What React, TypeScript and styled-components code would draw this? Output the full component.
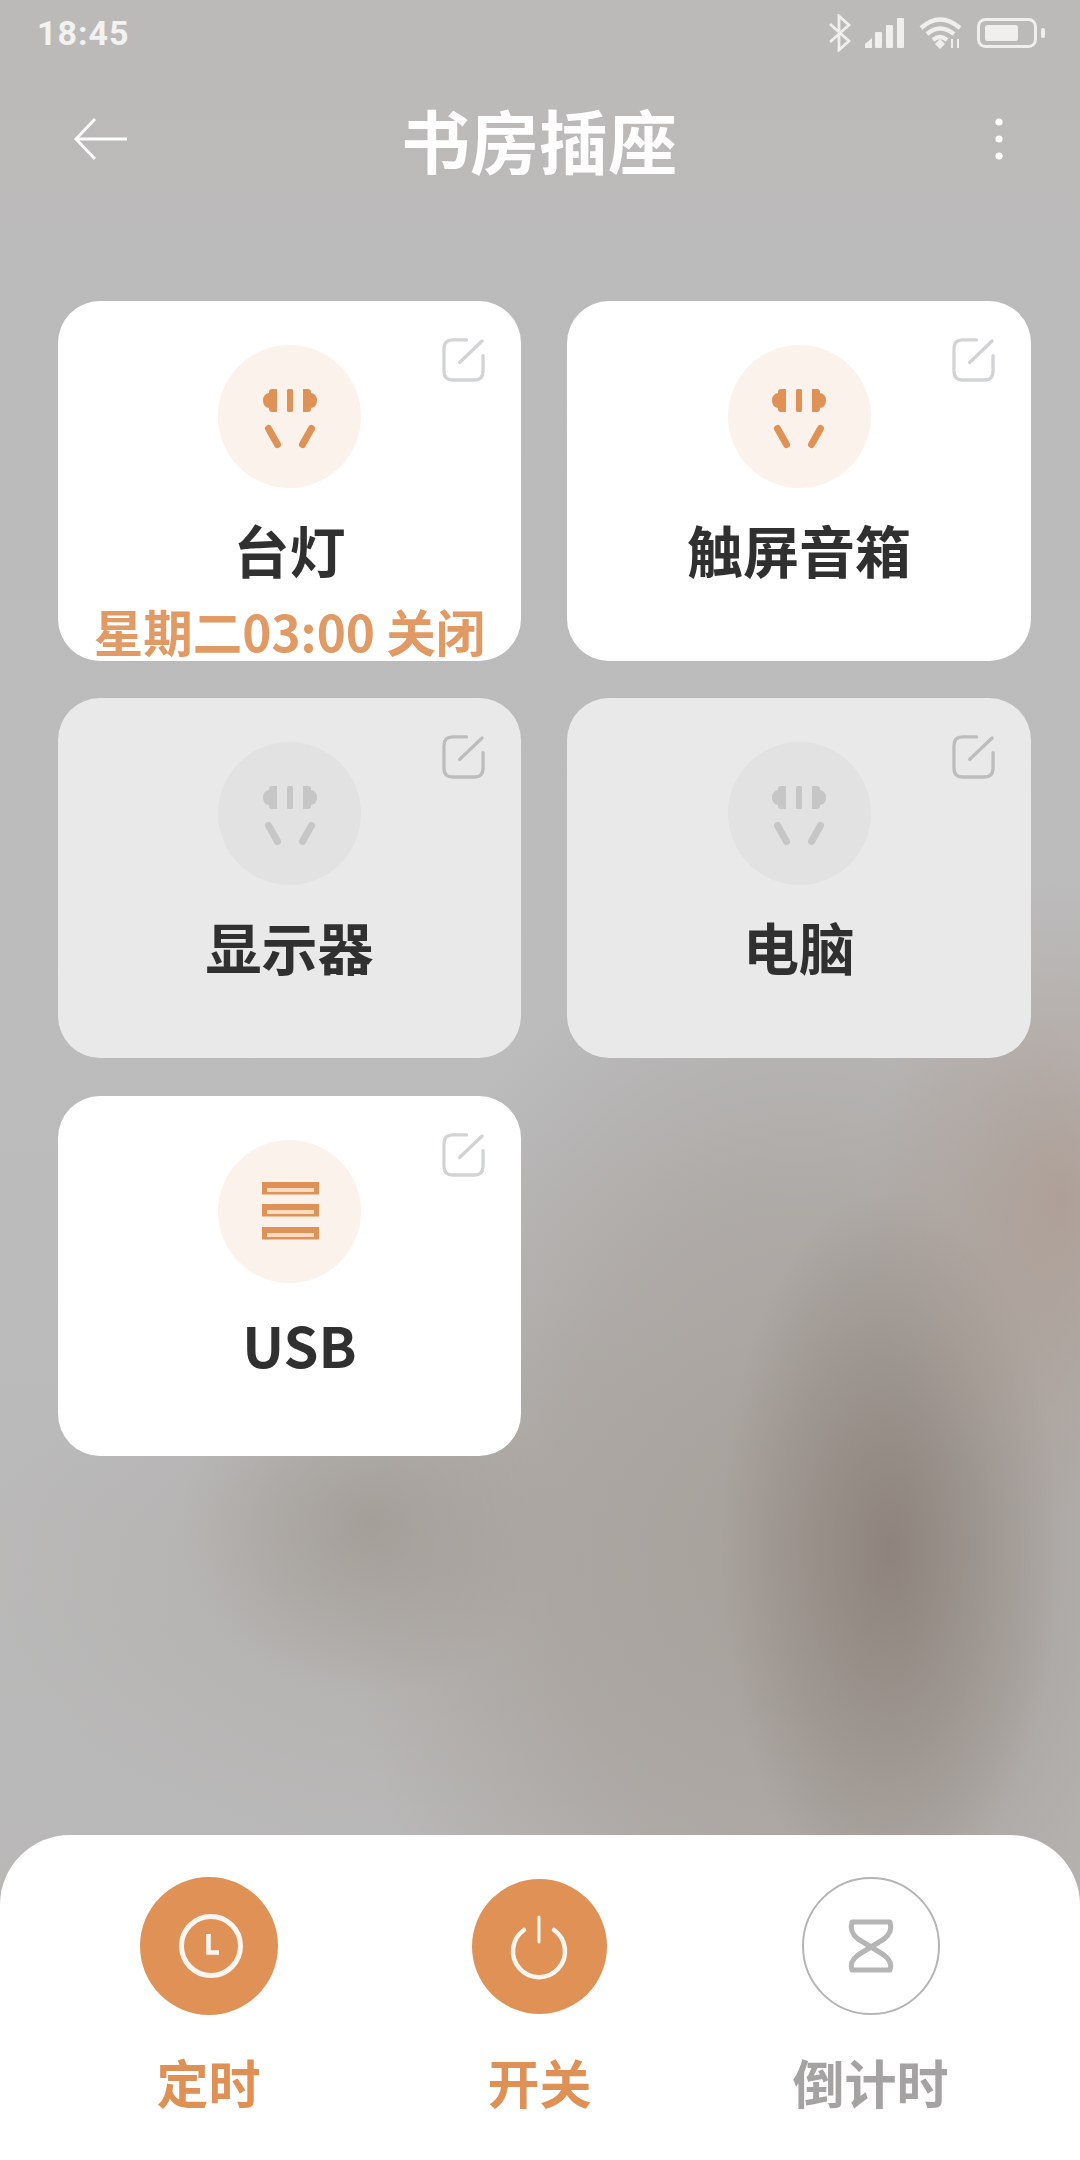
import React, { FC } from 'react'
import styled, { createGlobalStyle } from 'styled-components'

const ORANGE = '#e09155'
const FONT = '"Noto Sans CJK SC", "Noto Sans", sans-serif'

const GlobalStyle = createGlobalStyle`
  html, body {
    margin: 0;
    padding: 0;
  }
  body {
    font-family: ${FONT};
  }
`

const Page = styled.div`
  position: relative;
  width: 1080px;
  height: 2160px;
  overflow: hidden;
  display: flex;
  flex-direction: column;
  background:
    radial-gradient(ellipse 190px 320px at 1060px 1200px, rgba(172, 155, 145, 0.8), rgba(172, 155, 145, 0.4) 50%, rgba(172, 155, 145, 0)),
    radial-gradient(ellipse 170px 360px at 890px 1550px, rgba(140, 130, 122, 0.95), rgba(140, 130, 122, 0.5) 50%, rgba(140, 130, 122, 0)),
    radial-gradient(ellipse 460px 620px at 800px 1540px, rgba(165, 158, 152, 0.9), rgba(165, 158, 152, 0.6) 55%, rgba(165, 158, 152, 0)),
    radial-gradient(ellipse 190px 170px at 370px 1525px, rgba(160, 154, 147, 0.8), rgba(160, 154, 147, 0)),
    radial-gradient(ellipse 500px 280px at 450px 1570px, rgba(176, 172, 168, 0.75), rgba(176, 172, 168, 0)),
    linear-gradient(#bbbab9, #bcbcbd 45%, #b8b7b6);
`

const StatusBar = styled.div`
  height: 66px;
  padding: 0 35px 0 37px;
  display: flex;
  align-items: center;
  justify-content: space-between;
  box-sizing: border-box;
`

const Time = styled.span`
  font-family: Roboto, sans-serif;
  font-size: 34px;
  font-weight: 700;
  letter-spacing: 1px;
  color: #f2f2f1;
`

const StatusIcons = styled.div`
  display: flex;
  align-items: center;
  gap: 14px;
`

const NavBar = styled.div`
  height: 146px;
  padding: 0 76px 0 74px;
  display: grid;
  grid-template-columns: 1fr auto 1fr;
  align-items: center;
  box-sizing: border-box;
`

const NavEnd = styled.div`
  display: flex;
  justify-content: flex-end;
`

const Title = styled.h1`
  margin: 0;
  font-size: 69px;
  line-height: 1;
  font-weight: 700;
  color: #fff;
`

const CardGrid = styled.div`
  margin-top: 89px;
  padding: 0 49px 0 58px;
  display: grid;
  grid-template-columns: 463px 464px;
  column-gap: 46px;
  row-gap: 37.4px;
`

const Card = styled.div<{ $off?: boolean }>`
  position: relative;
  height: 360px;
  padding-top: 44px;
  box-sizing: border-box;
  border-radius: 42px;
  overflow: hidden;
  display: flex;
  flex-direction: column;
  align-items: center;
  background: ${(p) => (p.$off ? '#e9e9ea' : '#fff')};
`

const EditIcon = styled.svg`
  position: absolute;
  top: 36px;
  right: 36px;
`

const IconCircle = styled.div<{ $off?: boolean }>`
  width: 143px;
  height: 143px;
  flex: none;
  border-radius: 50%;
  display: flex;
  align-items: center;
  justify-content: center;
  background: ${(p) => (p.$off ? '#e2e2e3' : '#fbf2eb')};
`

const Name = styled.div<{ $shift?: number }>`
  margin-top: 26px;
  padding-left: ${(p) => p.$shift ?? 0}px;
  font-size: 56px;
  line-height: 70px;
  font-weight: 600;
  color: #303030;
  white-space: nowrap;
`

const Status = styled.div`
  margin-top: 20px;
  font-size: 49.5px;
  line-height: 54px;
  font-weight: 600;
  color: #e19a63;
  white-space: nowrap;
`

const Sheet = styled.div`
  margin-top: auto;
  height: 325px;
  padding: 42px 44px 0 43px;
  box-sizing: border-box;
  border-radius: 70px 70px 0 0;
  background: #fff;
  display: grid;
  grid-template-columns: repeat(3, 1fr);
  align-items: start;
`

const Action = styled.div`
  display: flex;
  flex-direction: column;
  align-items: center;
`

const ActionCircle = styled.div<{ $on?: boolean; $size?: number }>`
  width: ${(p) => p.$size ?? 138}px;
  height: ${(p) => p.$size ?? 138}px;
  margin: ${(p) => (138 - (p.$size ?? 138)) / 2}px 0;
  box-sizing: border-box;
  border-radius: 50%;
  display: flex;
  align-items: center;
  justify-content: center;
  background: ${(p) => (p.$on ? ORANGE : '#fff')};
  border: ${(p) => (p.$on ? 'none' : '2.5px solid #b5b5b5')};
`

const ActionLabel = styled.div<{ $on?: boolean }>`
  margin-top: 32px;
  font-size: 52px;
  line-height: 70px;
  font-weight: 600;
  color: ${(p) => (p.$on ? '#de9055' : '#a5a3a2')};
`

const Edit: FC<{ color: string }> = ({ color }) => (
  <EditIcon width="43" height="45" viewBox="0 0 44 46" fill="none" stroke={color} strokeWidth="3.4" strokeLinecap="round">
    <path d="M25 3 H11 Q2 3 2 12 V35 Q2 44 11 44 H33 Q42 44 42 35 V19" />
    <path d="M18 26 L41 4" />
  </EditIcon>
)

const SocketGlyph: FC<{ color: string }> = ({ color }) => (
  <svg width="80" height="80" viewBox="0 0 80 80" fill={color}>
    <path d="M27 12 H22 Q19 12 19 15 V16 Q13 17 13 23.5 Q13 30 19 31 V32 Q19 35 22 35 H27 Z" />
    <path d="M53 12 H58 Q61 12 61 15 V16 Q67 17 67 23.5 Q67 30 61 31 V32 Q61 35 58 35 H53 Z" />
    <rect x="37" y="12" width="6" height="23" rx="1.5" />
    <path d="M18.5 51.5 L27.5 67.5 M61.5 51.5 L52.5 67.5" stroke={color} strokeWidth="7" strokeLinecap="round" />
  </svg>
)

const UsbGlyph: FC = () => (
  <svg width="80" height="80" viewBox="0 0 80 80">
    {[11, 33, 56].map((y) => (
      <g key={y}>
        <rect x="12" y={y} width="57" height="12.5" fill={ORANGE} />
        <rect x="17" y={y + 6} width="47" height="4" fill="#fbdcc2" />
      </g>
    ))}
  </svg>
)

const ClockGlyph: FC = () => (
  <svg width="74" height="70" viewBox="0 0 74 70" fill="none" stroke="#fdf6f0" strokeWidth="5">
    <circle cx="39" cy="35" r="29.5" />
    <path d="M36.5 23 V41.5 H47" strokeWidth="4.6" />
  </svg>
)

const PowerGlyph: FC = () => (
  <svg width="70" height="70" viewBox="0 0 70 70" fill="none" stroke="#fdf6f0" strokeWidth="4.5" strokeLinecap="round">
    <path d="M19 19 A26 26 0 1 0 49 19" />
    <path d="M34 6 V31" strokeWidth="3" />
  </svg>
)

const HourglassGlyph: FC = () => (
  <svg width="50" height="54" viewBox="0 0 50 54" fill="none" stroke="#b5b5b5" strokeWidth="5" strokeLinejoin="round">
    <path d="M6 3 H44 Q47 13 38 20 L12 36 Q3 43 6 51 H44 Q47 43 38 36 L12 20 Q3 13 6 3 Z" />
  </svg>
)

const Bluetooth: FC = () => (
  <svg width="22" height="38" viewBox="0 0 22 38" fill="none" stroke="#f0efee" strokeWidth="2.8">
    <path d="M1 10 L20 27 L10 36 V2 L20 11 L1 28" />
  </svg>
)

const Signal: FC = () => (
  <svg width="40" height="30" viewBox="0 0 40 30" fill="#f0efee">
    <path d="M0 30 V26 L7 20 V30 Z" />
    <rect x="10" y="14" width="7" height="16" rx="1" />
    <rect x="21" y="7" width="7" height="23" rx="1" />
    <rect x="32" y="0" width="7" height="30" rx="1" />
  </svg>
)

const Wifi: FC = () => (
  <svg width="44" height="32" viewBox="0 0 44 32" fill="none" stroke="#f0efee" strokeWidth="4.4">
    <path d="M2 11 Q21 -6 41 11" />
    <path d="M8 17 Q21 6 35 17" />
    <path d="M14 23 Q21 17 28 23" />
    <path d="M16 27 L21 22 L26 27 L21 32 Z" fill="#f0efee" stroke="none" />
    <path d="M33 31 V22 M39 31 V22" strokeWidth="2" />
  </svg>
)

const Battery: FC = () => (
  <svg width="68" height="30" viewBox="0 0 68 30">
    <rect x="1.5" y="1.5" width="57" height="27" rx="7" fill="none" stroke="#f0efee" strokeWidth="3" />
    <rect x="8" y="7" width="33" height="16" rx="2.5" fill="#f0efee" />
    <rect x="64" y="10" width="4" height="10" rx="2" fill="#f0efee" />
  </svg>
)

interface Outlet {
  name: string
  off?: boolean
  usb?: boolean
  status?: string
  shift?: number
}

const OUTLETS: Outlet[] = [
  { name: '台灯', status: '星期二03:00 关闭' },
  { name: '触屏音箱' },
  { name: '显示器', off: true },
  { name: '电脑', off: true },
  { name: 'USB', usb: true, shift: 20 },
]

export default function App() {
  return (
    <Page>
      <GlobalStyle />
      <StatusBar>
        <Time>18:45</Time>
        <StatusIcons>
          <Bluetooth />
          <Signal />
          <Wifi />
          <Battery />
        </StatusIcons>
      </StatusBar>
      <NavBar>
        <svg width="54" height="44" viewBox="0 0 54 44" fill="none" stroke="#fff" strokeWidth="3">
          <path d="M53 22 H3 M21 2 L2 22 L21 42" />
        </svg>
        <Title>书房插座</Title>
        <NavEnd>
          <svg width="10" height="44" viewBox="0 0 10 44" fill="#fff">
            <circle cx="5" cy="5" r="3.6" />
            <circle cx="5" cy="22" r="3.6" />
            <circle cx="5" cy="39" r="3.6" />
          </svg>
        </NavEnd>
      </NavBar>
      <CardGrid>
        {OUTLETS.map((o) => (
          <Card key={o.name} $off={o.off}>
            <Edit color={o.off ? '#bdbdbe' : '#d2d3d5'} />
            <IconCircle $off={o.off}>
              {o.usb ? <UsbGlyph /> : <SocketGlyph color={o.off ? '#c6c6c7' : ORANGE} />}
            </IconCircle>
            <Name $shift={o.shift}>{o.name}</Name>
            {o.status && <Status>{o.status}</Status>}
          </Card>
        ))}
      </CardGrid>
      <Sheet>
        <Action>
          <ActionCircle $on>
            <ClockGlyph />
          </ActionCircle>
          <ActionLabel $on>定时</ActionLabel>
        </Action>
        <Action>
          <ActionCircle $on $size={135}>
            <PowerGlyph />
          </ActionCircle>
          <ActionLabel $on>开关</ActionLabel>
        </Action>
        <Action>
          <ActionCircle>
            <HourglassGlyph />
          </ActionCircle>
          <ActionLabel>倒计时</ActionLabel>
        </Action>
      </Sheet>
    </Page>
  )
}
